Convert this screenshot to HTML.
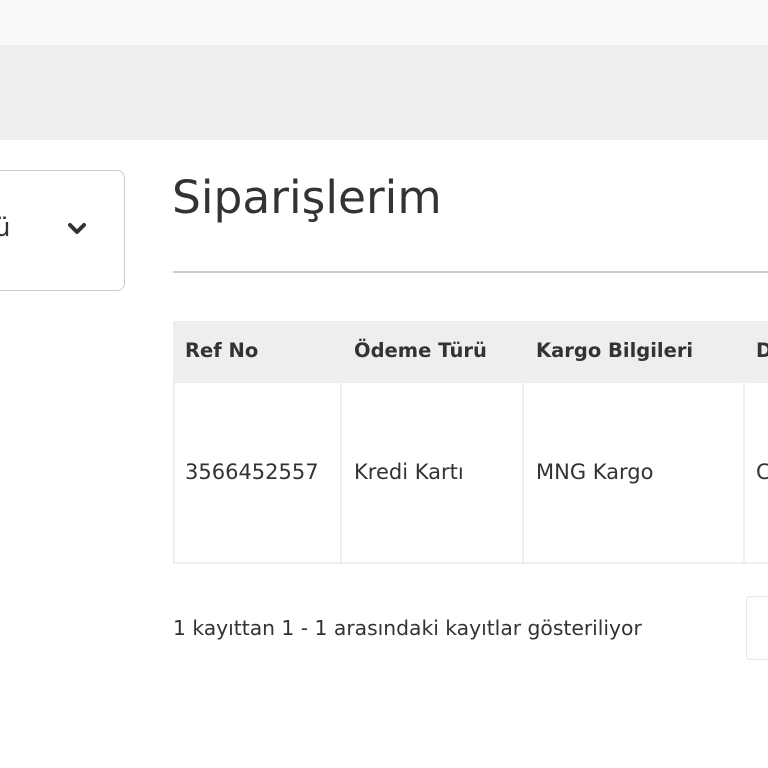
<!DOCTYPE html>
<html><head><meta charset="utf-8"><style>
body{margin:0;width:768px;height:768px;overflow:hidden;background:#fff;font-family:"DejaVu Sans",sans-serif;color:#333;position:relative}
.a{position:absolute;white-space:nowrap}
.h{font-size:19.5px;font-weight:bold}
.b{font-size:21px}
</style></head><body>
<div class="a" style="left:0;top:0;width:768px;height:45px;background:#f9f9f9"></div>
<div class="a" style="left:0;top:45px;width:768px;height:95px;background:#eeeeee"></div>
<div class="a" style="left:-20px;top:170px;width:143px;height:119px;border:1.5px solid #ccc;border-radius:8px"></div>
<div class="a" style="left:-6px;top:213px;font-size:26px">ü</div>
<svg class="a" style="left:67px;top:222px" width="20" height="14" viewBox="0 0 20 14"><path d="M3 3 L10 10 L17 3" fill="none" stroke="#333" stroke-width="4" stroke-linecap="round" stroke-linejoin="round"/></svg>
<div class="a" style="left:172px;top:171px;font-size:45.5px;color:#333">Siparişlerim</div>
<div class="a" style="left:173px;top:271px;width:600px;height:2px;background:#ccc"></div>
<div class="a" style="left:173px;top:321px;width:600px;height:62px;background:#eee"></div>
<div class="a" style="left:173px;top:383px;width:600px;height:181px;border-left:2px solid #eee;border-bottom:2px solid #eee;box-sizing:border-box"></div>
<div class="a" style="left:340px;top:383px;width:2px;height:180px;background:#eee"></div>
<div class="a" style="left:522px;top:383px;width:2px;height:180px;background:#eee"></div>
<div class="a" style="left:743px;top:383px;width:2px;height:180px;background:#eee"></div>
<div class="a h" style="left:185px;top:339px">Ref No</div>
<div class="a h" style="left:354px;top:339px">Ödeme Türü</div>
<div class="a h" style="left:536px;top:339px">Kargo Bilgileri</div>
<div class="a h" style="left:756px;top:339px">D</div>
<div class="a b" style="left:185px;top:460px">3566452557</div>
<div class="a b" style="left:354px;top:460px">Kredi Kartı</div>
<div class="a b" style="left:536px;top:460px">MNG Kargo</div>
<div class="a b" style="left:756px;top:460px">C</div>
<div class="a" style="left:173px;top:616px;font-size:20.3px">1 kayıttan 1 - 1 arasındaki kayıtlar gösteriliyor</div>
<div class="a" style="left:746px;top:596px;width:40px;height:62px;border:1.5px solid #e5e5e5;border-radius:4px"></div>
</body></html>
